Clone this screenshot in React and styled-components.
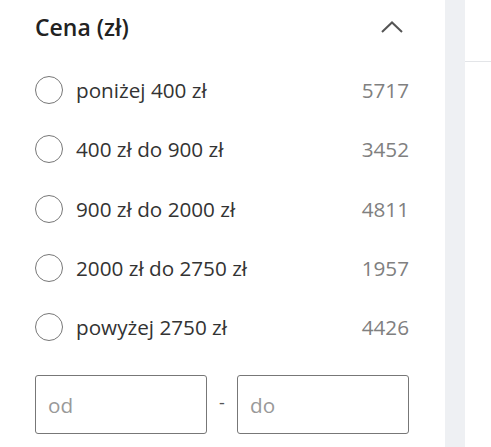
import React from 'react';
import styled, { createGlobalStyle } from 'styled-components';

const GlobalStyle = createGlobalStyle`
    html, body {
        margin: 0;
        padding: 0;
        background: #fff;
        font-family: "Open Sans", "Liberation Sans", sans-serif;
    }
`;

const Page = styled.div`
    display: flex;
    width: 491px;
    height: 447px;
    overflow: hidden;
`;

const Sidebar = styled.div`
    width: 445px;
    flex-shrink: 0;
    box-sizing: border-box;
    padding: 9px 36px 0 35px;
    background: #fff;
`;

const Divider = styled.div`
    width: 20px;
    flex-shrink: 0;
    background: #eef0f3;
`;

const Content = styled.div`
    flex: 1;
    padding-top: 61px;
`;

const ContentLine = styled.div`
    height: 1px;
    background: #e3e5e8;
`;

const Header = styled.div`
    display: flex;
    align-items: center;
    justify-content: space-between;
    height: 36px;
`;

const Title = styled.h3`
    margin: 0;
    font-size: 23px;
    font-weight: 600;
    color: #222;
`;

const Chevron = styled.svg`
    width: 22px;
    height: 12px;
    margin-right: 6px;
`;

const Options = styled.ul`
    list-style: none;
    margin: 31px 0 0;
    padding: 0;
    display: flex;
    flex-direction: column;
    gap: 31.25px;
`;

const Option = styled.li`
    display: flex;
    align-items: center;
    height: 28px;
`;

const Radio = styled.span`
    width: 26px;
    height: 26px;
    border: 1px solid #777;
    border-radius: 50%;
    flex-shrink: 0;
`;

const Label = styled.span`
    flex: 1;
    margin-left: 13px;
    font-size: 20.7px;
    color: #333;
`;

const Count = styled.span`
    font-size: 20.7px;
    color: #808080;
`;

const Range = styled.div`
    display: flex;
    align-items: center;
    margin-top: 34px;
`;

const Field = styled.input`
    width: 172px;
    height: 59px;
    box-sizing: border-box;
    border: 1px solid #777;
    border-radius: 3px;
    padding: 0 12px;
    font-family: inherit;
    font-size: 20.7px;
    color: #333;
    outline: none;
    &::placeholder {
        color: #999;
    }
`;

const Dash = styled.span`
    flex: 1;
    text-align: center;
    font-size: 18px;
    color: #555;
    margin-top: -6px;
`;

const options = [
    { label: 'poniżej 400 zł', count: 5717 },
    { label: '400 zł do 900 zł', count: 3452 },
    { label: '900 zł do 2000 zł', count: 4811 },
    { label: '2000 zł do 2750 zł', count: 1957 },
    { label: 'powyżej 2750 zł', count: 4426 },
];

export default function App() {
    return (
        <Page>
            <GlobalStyle />
            <Sidebar>
                <Header>
                    <Title>Cena (zł)</Title>
                    <Chevron viewBox="0 0 22 12">
                        <path d="M1 11 L11 1.5 L21 11" fill="none" stroke="#555" strokeWidth="2" />
                    </Chevron>
                </Header>
                <Options>
                    {options.map((o) => (
                        <Option key={o.label}>
                            <Radio />
                            <Label>{o.label}</Label>
                            <Count>{o.count}</Count>
                        </Option>
                    ))}
                </Options>
                <Range>
                    <Field placeholder="od" />
                    <Dash>-</Dash>
                    <Field placeholder="do" />
                </Range>
            </Sidebar>
            <Divider />
            <Content>
                <ContentLine />
            </Content>
        </Page>
    );
}
